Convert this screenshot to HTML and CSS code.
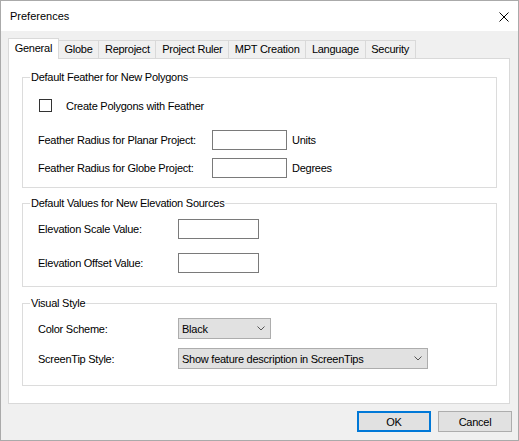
FILE: index.html
```html
<!DOCTYPE html>
<html>
<head>
<meta charset="utf-8">
<title>Preferences</title>
<link rel="stylesheet" href="styles.css">
</head>
<body>
<div class="window">
  <div class="titlebar">
    <span class="title">Preferences</span>
    <svg class="close" viewBox="0 0 10 10" width="10" height="10"><path d="M0.5 0.5 L9.5 9.5 M9.5 0.5 L0.5 9.5" stroke="#000" stroke-width="1" fill="none"/></svg>
  </div>
  <div class="content">
    <div class="tabs">
      <div class="tab active">General</div>
      <div class="tab">Globe</div>
      <div class="tab">Reproject</div>
      <div class="tab">Project Ruler</div>
      <div class="tab">MPT Creation</div>
      <div class="tab">Language</div>
      <div class="tab">Security</div>
    </div>
    <div class="panel">
      <fieldset class="group g1">
        <legend>Default Feather for New Polygons</legend>
        <div class="group-body feather">
          <div class="check-row"><span class="checkbox"></span><span class="check-label">Create Polygons with Feather</span></div>
          <div class="row row-planar"><span class="lbl lbl-wide">Feather Radius for Planar Project:</span><span class="input input-sm"></span><span class="unit">Units</span></div>
          <div class="row row-globe"><span class="lbl lbl-wide">Feather Radius for Globe Project:</span><span class="input input-sm"></span><span class="unit">Degrees</span></div>
        </div>
      </fieldset>
      <fieldset class="group g2">
        <legend>Default Values for New Elevation Sources</legend>
        <div class="group-body elev">
          <div class="row"><span class="lbl">Elevation Scale Value:</span><span class="input input-md"></span></div>
          <div class="row row-offset"><span class="lbl">Elevation Offset Value:</span><span class="input input-md"></span></div>
        </div>
      </fieldset>
      <fieldset class="group g3">
        <legend>Visual Style</legend>
        <div class="group-body visual">
          <div class="row"><span class="lbl">Color Scheme:</span><div class="combo combo-sm"><span>Black</span><svg class="chev" viewBox="0 0 8 5" width="8" height="5"><polyline points="0.5,0.5 4,4 7.5,0.5" fill="none" stroke="#555" stroke-width="1"/></svg></div></div>
          <div class="row row-tip"><span class="lbl">ScreenTip Style:</span><div class="combo combo-lg"><span>Show feature description in ScreenTips</span><svg class="chev" viewBox="0 0 8 5" width="8" height="5"><polyline points="0.5,0.5 4,4 7.5,0.5" fill="none" stroke="#555" stroke-width="1"/></svg></div></div>
        </div>
      </fieldset>
    </div>
  </div>
  <div class="footer">
    <button class="btn btn-default">OK</button>
    <button class="btn">Cancel</button>
  </div>
</div>
</body>
</html>
```

FILE: styles.css
```css
* { box-sizing: border-box; }

body {
  margin: 0;
  font-family: "Liberation Sans", Arial, sans-serif;
  font-size: 11px;
  color: #000;
  letter-spacing: -0.25px;
}

.window {
  width: 519px;
  height: 441px;
  border: 1px solid #aaaaaa;
  background: #f0f0f0;
  display: flex;
  flex-direction: column;
}

.titlebar {
  height: 30px;
  flex: none;
  background: #fff;
  display: flex;
  align-items: center;
  justify-content: space-between;
  padding: 0 9px 0 9px;
}

.title {
  font-size: 11px;
  letter-spacing: 0;
}

.close {
  display: block;
  margin-top: 1px;
}

.content {
  flex: 1;
  display: flex;
  flex-direction: column;
  padding: 7px 8px 0 7px;
}

.tabs {
  height: 20px;
  flex: none;
  display: flex;
  align-items: flex-end;
}

.tab {
  height: 18px;
  padding: 0 5.7px 1px;
  border: 1px solid #d9d9d9;
  border-bottom: none;
  margin-left: -1px;
  background: #f0f0f0;
  display: flex;
  align-items: center;
  white-space: nowrap;
}

.tab:first-child { margin-left: 0; }

.tab.active {
  height: 21px;
  margin-bottom: -1px;
  background: #fff;
  position: relative;
  z-index: 1;
  padding-bottom: 2px;
}

.panel {
  flex: 1;
  border: 1px solid #d9d9d9;
  background: #fff;
  padding: 0 12px 0 13px;
  display: flex;
  flex-direction: column;
}

.group {
  margin: 0;
  padding: 0;
  border: 1px solid #dcdcdc;
  min-width: 0;
}

.group legend {
  margin-left: 7px;
  padding: 0 1px;
  line-height: 13px;
  height: 13px;
}

.g1 { margin-top: 12px; }
.g2 { margin-top: 9px; }
.g3 { margin-top: 10px; }

.group-body {
  display: flex;
  flex-direction: column;
  padding-left: 15px;
}

.feather { padding-top: 15px; padding-bottom: 9px; }
.elev { padding-top: 9px; padding-bottom: 13px; }
.visual { padding-top: 8px; padding-bottom: 16px; }

.check-row {
  height: 13px;
  display: flex;
  align-items: center;
}

.checkbox {
  width: 13px;
  height: 13px;
  margin-left: 1px;
  border: 1px solid #333;
  background: #fff;
  flex: none;
}

.check-label { margin-left: 14px; }

.row {
  display: flex;
  align-items: center;
}

.row-planar { margin-top: 18px; }
.row-globe { margin-top: 8px; }
.row-offset { margin-top: 14px; }
.row-tip { margin-top: 9px; }

.lbl {
  width: 140px;
  flex: none;
  white-space: nowrap;
}

.lbl-wide { width: 174px; }

.input {
  height: 20px;
  border: 1px solid #7a7a7a;
  background: #fff;
  flex: none;
}

.input-sm { width: 75px; }
.input-md { width: 81px; }

.unit { margin-left: 5px; }

.combo {
  height: 21px;
  border: 1px solid #adadad;
  background: #e1e1e1;
  display: flex;
  align-items: center;
  justify-content: space-between;
  padding: 0 5px 0 3px;
  flex: none;
  white-space: nowrap;
}

.combo-sm { width: 93px; }
.combo-lg { width: 250px; }

.chev { display: block; flex: none; }

.footer {
  height: 36px;
  flex: none;
  display: flex;
  justify-content: flex-end;
  align-items: flex-start;
  gap: 7px;
  padding: 7px 6px 0 0;
}

.btn {
  width: 74px;
  height: 21px;
  border: 1px solid #adadad;
  background: #e1e1e1;
  font: inherit;
  letter-spacing: inherit;
  color: #000;
  padding: 0;
  margin: 0;
}

.btn-default { border: 2px solid #0078d7; }
```
